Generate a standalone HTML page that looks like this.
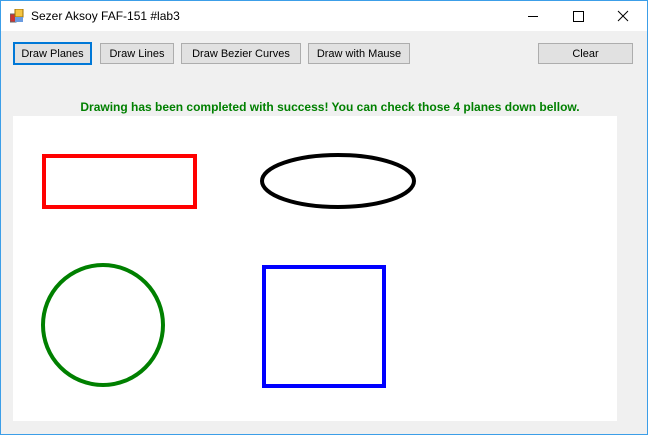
<!DOCTYPE html>
<html><head><style>
body{margin:0;width:648px;height:435px;overflow:hidden;background:#f0f0f0;font-family:"Liberation Sans",sans-serif;position:relative;}
.frame{position:absolute;left:0;top:0;width:646px;height:433px;border:1px solid #3c9ee8;z-index:5;pointer-events:none;}
.title{position:absolute;left:0;top:0;width:648px;height:31px;background:#fff;}
.title span{position:absolute;left:31px;top:9px;font-size:12px;color:#000;}
.btn{position:absolute;top:43px;height:19px;border:1px solid #adadad;background:#e1e1e1;font-size:11px;line-height:21px;text-align:center;color:#000;}
.msg{position:absolute;top:100px;left:0;width:660px;text-align:center;font-size:12px;font-weight:bold;color:#008000;}
.canvas{position:absolute;left:13px;top:116px;width:604px;height:305px;background:#fff;}
</style></head><body>
<div class="frame"></div>
<div class="title">
<svg style="position:absolute;left:10px;top:9px" width="14" height="14"><rect x="0" y="5" width="6" height="8" fill="#c33" stroke="#666" stroke-width="1"/><rect x="5" y="0" width="8" height="8" fill="#f5c542" stroke="#a07000"/><rect x="5" y="8" width="8" height="5" fill="#6a9be0"/></svg>
<span>Sezer Aksoy FAF-151 #lab3</span>
<svg style="position:absolute;left:524px;top:8px" width="110" height="16"><line x1="4" y1="8.5" x2="14" y2="8.5" stroke="#000"/><rect x="49.5" y="3.5" width="10" height="10" fill="none" stroke="#000"/><path d="M94 3L104 13M104 3L94 13" stroke="#000"/></svg>
</div>
<div class="btn" style="left:13px;width:75px;border:2px solid #0078d7;top:42px;">Draw Planes</div>
<div class="btn" style="left:100px;width:72px;">Draw Lines</div>
<div class="btn" style="left:181px;width:118px;">Draw Bezier Curves</div>
<div class="btn" style="left:308px;width:100px;">Draw with Mause</div>
<div class="btn" style="left:538px;width:93px;">Clear</div>
<div class="msg">Drawing has been completed with success! You can check those 4 planes down bellow.</div>
<div class="canvas">
<svg width="604" height="305">
<rect x="31" y="40" width="151" height="51" fill="none" stroke="#f00" stroke-width="4"/>
<ellipse cx="325" cy="65" rx="76" ry="26" fill="none" stroke="#000" stroke-width="4"/>
<circle cx="90" cy="209" r="60" fill="none" stroke="#008000" stroke-width="4"/>
<rect x="251" y="151" width="120" height="119" fill="none" stroke="#00f" stroke-width="4"/>
</svg>
</div>
</body></html>
